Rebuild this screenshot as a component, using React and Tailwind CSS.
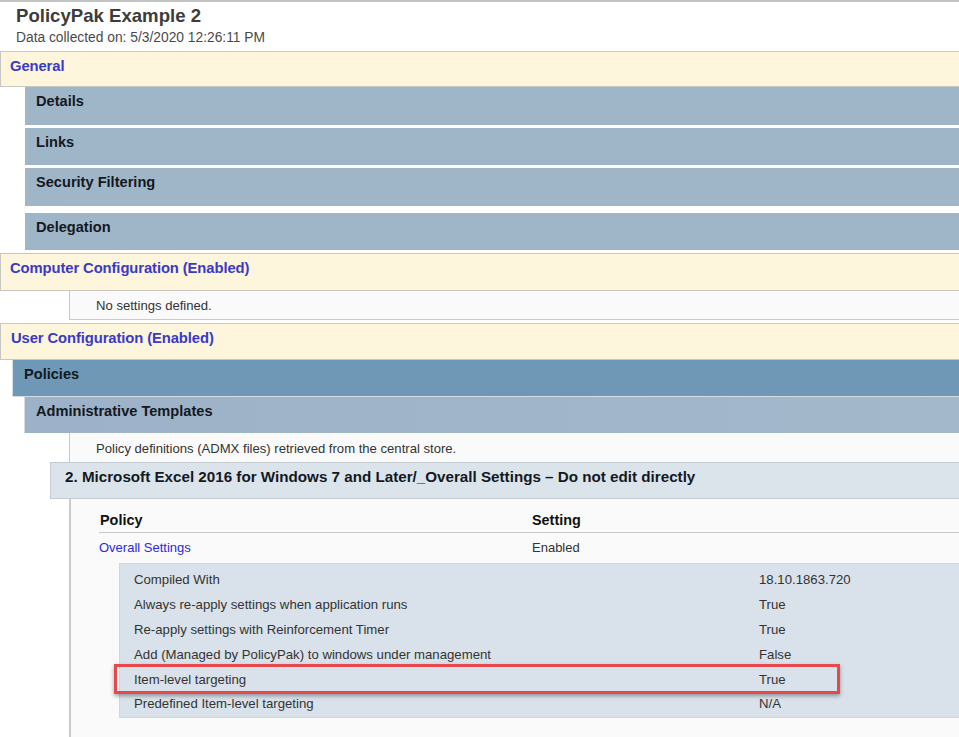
const rows = [
  ['Compiled With', '18.10.1863.720'],
  ['Always re-apply settings when application runs', 'True'],
  ['Re-apply settings with Reinforcement Timer', 'True'],
  ['Add (Managed by PolicyPak) to windows under management', 'False'],
  ['Item-level targeting', 'True'],
  ['Predefined Item-level targeting', 'N/A'],
]

function CategoryBar({ label, className = '', textClassName = 'pl-[9px]' }) {
  return (
    <div className={`border-y border-l border-[#c9c7c2] bg-[#fdf5dc] ${className}`}>
      <span className={`block pt-[3px] text-[14.8px] font-bold tracking-[-0.1px] text-[#3a3ac8] ${textClassName}`}>
        {label}
      </span>
    </div>
  )
}

function SectionBar({ label, className = '' }) {
  return (
    <div className={`ml-[24px] border-l border-white bg-[#9fb6c9] pl-[11px] pt-[4px] text-[14.6px] font-bold text-[#14181f] ${className}`}>
      {label}
    </div>
  )
}

export default function App() {
  return (
    <div className="h-[737px] w-[959px] overflow-hidden bg-white font-['Liberation_Sans',Arial,sans-serif]">
      <div className="h-[51px] border-t-2 border-[#c4c4c4] pl-[16px]">
        <h1 className="pt-[4px] text-[18.6px] leading-[20px] font-bold text-[#3c3c3c]">PolicyPak Example 2</h1>
        <p className="mt-[4px] text-[13.8px] leading-[16px] text-[#4a4a4a]">Data collected on: 5/3/2020 12:26:11 PM</p>
      </div>

      <CategoryBar label="General" className="h-[36px]" />
      <SectionBar label="Details" className="h-[38px]" />
      <SectionBar label="Links" className="mt-[3px] h-[37px]" />
      <SectionBar label="Security Filtering" className="mt-[3px] h-[38px]" />
      <SectionBar label="Delegation" className="mt-[7px] h-[37px]" />

      <CategoryBar label="Computer Configuration (Enabled)" className="mt-[3px] h-[38px]" />
      <div className="ml-[69px] h-[29px] border-b border-l border-[#c9c9c9] bg-[#fafafa] pl-[26px] pt-[5px] text-[13.1px] text-[#333]">
        No settings defined.
      </div>

      <CategoryBar label="User Configuration (Enabled)" className="mt-[3px] h-[37px]" textClassName="pl-[10px]" />
      <div className="ml-[12px] h-[37px] border-b border-l border-[#d5dde4] bg-[#6f98b6] pl-[11px] pt-[4px] text-[14.6px] font-bold text-[#14181f]">
        Policies
      </div>
      <div className="ml-[24px] h-[36px] border-l border-[#d5dde4] bg-[linear-gradient(90deg,#9db2c8,#a3b8cb)] pl-[11px] pt-[4px] text-[14.6px] font-bold text-[#14181f]">
        Administrative Templates
      </div>
      <div className="ml-[69px] h-[29px] border-l border-[#c9c9c9] bg-[#fafafa] pl-[26px] pt-[6px] text-[13.1px] text-[#333]">
        Policy definitions (ADMX files) retrieved from the central store.
      </div>
      <div className="ml-[50px] h-[37px] border-y border-l border-[#c4ccd2] bg-[#dbe4eb] pl-[14px] pt-[3px] text-[15.2px] font-bold text-[#14181f]">
        2. Microsoft Excel 2016 for Windows 7 and Later/_Overall Settings – Do not edit directly
      </div>

      <div className="ml-[69px] h-[238px] border-l-2 border-[#cbcbcb] bg-[#fafafa] pt-[11px]">
        <div className="ml-[28px] grid h-[23px] grid-cols-[433px_1fr] border-b border-[#c8c8c8] text-[14.4px] font-bold text-[#111]">
          <span className="pl-[1px]">Policy</span>
          <span>Setting</span>
        </div>
        <div className="ml-[28px] grid h-[30px] grid-cols-[433px_1fr] items-center text-[13px]">
          <span className="text-[#2a2ae0]">Overall Settings</span>
          <span className="text-[#333]">Enabled</span>
        </div>
        <div className="relative ml-[48px] h-[155px] border-y border-l border-[#d0d6db] bg-[#d9e2ea] pl-[14px] pt-[3px] text-[13.2px] text-[#333]">
          {rows.map(([name, value], i) => (
            <div key={name} className={`grid grid-cols-[625px_1fr] items-center ${i === 5 ? 'h-[24px]' : 'h-[25px]'}`}>
              <span>{name}</span>
              <span>{value}</span>
            </div>
          ))}
          <div className="absolute left-[-6px] top-[100px] h-[30px] w-[726px] border-[3px] border-[#e8484c] shadow-[0_2px_4px_rgba(0,0,0,0.35)]" />
        </div>
      </div>
    </div>
  )
}
